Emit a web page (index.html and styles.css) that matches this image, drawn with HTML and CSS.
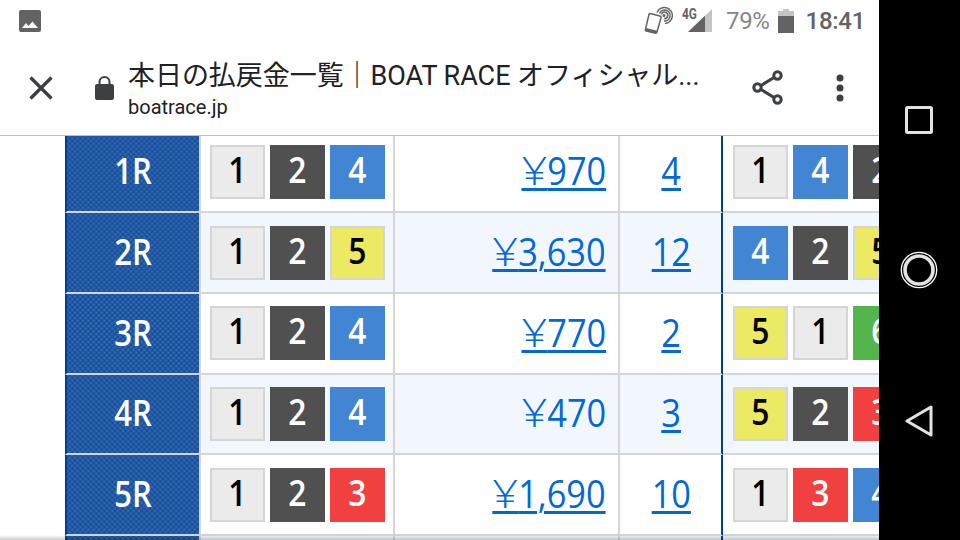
FILE: index.html
```
<!DOCTYPE html>
<html lang="ja">
<head>
  <meta charset="UTF-8">
  <meta name="viewport" content="width=device-width, initial-scale=1.0">
  <title>本日の払戻金一覧｜BOAT RACE オフィシャルウェブサイト</title>
  <link rel="stylesheet" href="styles.css">
</head>
<body>
  <div class="screen">
    <header class="top">
      <div class="status">
        <svg class="ic-image" width="22" height="22" viewBox="0 0 22 22"><rect width="22" height="22" rx="2" fill="#636363"/><path d="M3 18l4-5 2.500 3L13.500 11.500 19 18z" fill="#fff"/></svg>
        <div class="status-right">
          <svg class="ic-nfc" width="30" height="30" viewBox="0 0 30 30" fill="none" stroke="#636363" stroke-width="1.500">
            <path d="M6 7.500l10 2.500q1.500.400 1 1.800l-4 14.200q-.5 1.500-2 1.100L2.500 25q-1.500-.4-1-2L5 8.500q.300-1.200 1-1z"/>
            <path d="M1.800 23.500l11 2.800" stroke-width="3"/>
            <path d="M13 6.500a8 8 0 1 1 8 11M15.500 7.500a5.500 5.500 0 1 1 4.500 7.500M17.500 8.500a3.200 3.200 0 1 1 2.500 4"/>
            <circle cx="20" cy="9.500" r="1.500" fill="#636363" stroke="none"/>
          </svg>
          <span class="net">4G</span>
          <svg class="ic-signal" width="24" height="23" viewBox="0 0 24 23"><path d="M0 23L24 0v23z" fill="#c4c4c4"/><path d="M0 23L17 6.700V23z" fill="#636363"/></svg>
          <span class="percent">79%</span>
          <svg class="ic-battery" width="16" height="24" viewBox="0 0 16 24"><path d="M5 0h6v2h5v5H0V2h5z" fill="#c4c4c4"/><path d="M0 7h16v17H0z" fill="#636363"/></svg>
          <span class="clock">18:41</span>
        </div>
      </div>
      <div class="toolbar">
        <svg class="ic-close" width="24" height="24" viewBox="0 0 24 24"><path d="M1.500 1.500l21 21M22.500 1.500l-21 21" stroke="#3c4043" stroke-width="3.300"/></svg>
        <svg class="ic-lock" width="19" height="24" viewBox="0 0 19 24"><rect y="8" width="19" height="16" rx="2" fill="#3c4043"/><path d="M4.500 9V6a5 5 0 0 1 10 0v3" fill="none" stroke="#3c4043" stroke-width="2"/></svg>
        <div class="page-info">
          <div class="page-title">本日の払戻金一覧｜BOAT RACE オフィシャル...</div>
          <div class="page-url">boatrace.jp</div>
        </div>
        <svg class="ic-share" width="32" height="35" viewBox="0 0 32 35" fill="none" stroke="#3c4043" stroke-width="3"><path d="M9 15.500L22 7.500M9 19.500l13 8"/><circle cx="5.500" cy="17.500" r="3.700"/><circle cx="25.500" cy="5.500" r="3.700"/><circle cx="25.500" cy="29.500" r="3.700"/></svg>
        <svg class="ic-more" width="8" height="28" viewBox="0 0 8 28" fill="#3c4043"><circle cx="4" cy="4" r="3.500"/><circle cx="4" cy="14" r="3.500"/><circle cx="4" cy="24" r="3.500"/></svg>
      </div>
    </header>

    <main class="content">
      <div class="results">
        <div class="row">
          <div class="race"><span>1R</span></div>
          <div class="combo"><i class="n1"><span>1</span></i><i class="n2"><span>2</span></i><i class="n4"><span>4</span></i></div>
          <div class="price"><a><b>¥</b>970</a></div>
          <div class="rank"><a>4</a></div>
          <div class="combo second"><i class="n1"><span>1</span></i><i class="n4"><span>4</span></i><i class="n2"><span>2</span></i></div>
        </div>
        <div class="row even">
          <div class="race"><span>2R</span></div>
          <div class="combo"><i class="n1"><span>1</span></i><i class="n2"><span>2</span></i><i class="n5"><span>5</span></i></div>
          <div class="price"><a><b>¥</b>3,630</a></div>
          <div class="rank"><a>12</a></div>
          <div class="combo second"><i class="n4"><span>4</span></i><i class="n2"><span>2</span></i><i class="n5"><span>5</span></i></div>
        </div>
        <div class="row">
          <div class="race"><span>3R</span></div>
          <div class="combo"><i class="n1"><span>1</span></i><i class="n2"><span>2</span></i><i class="n4"><span>4</span></i></div>
          <div class="price"><a><b>¥</b>770</a></div>
          <div class="rank"><a>2</a></div>
          <div class="combo second"><i class="n5"><span>5</span></i><i class="n1"><span>1</span></i><i class="n6"><span>6</span></i></div>
        </div>
        <div class="row even">
          <div class="race"><span>4R</span></div>
          <div class="combo"><i class="n1"><span>1</span></i><i class="n2"><span>2</span></i><i class="n4"><span>4</span></i></div>
          <div class="price"><a class="plain"><b>¥</b>470</a></div>
          <div class="rank"><a>3</a></div>
          <div class="combo second"><i class="n5"><span>5</span></i><i class="n2"><span>2</span></i><i class="n3"><span>3</span></i></div>
        </div>
        <div class="row">
          <div class="race"><span>5R</span></div>
          <div class="combo"><i class="n1"><span>1</span></i><i class="n2"><span>2</span></i><i class="n3"><span>3</span></i></div>
          <div class="price"><a><b>¥</b>1,690</a></div>
          <div class="rank"><a>10</a></div>
          <div class="combo second"><i class="n1"><span>1</span></i><i class="n3"><span>3</span></i><i class="n4"><span>4</span></i></div>
        </div>
        <div class="row even">
          <div class="race"></div>
          <div class="combo"></div>
          <div class="price"></div>
          <div class="rank"></div>
          <div class="combo second"></div>
        </div>
      </div>
    </main>
  </div>

  <nav class="navbar">
    <svg width="28" height="28" viewBox="0 0 28 28"><rect x="1.500" y="1.500" width="25" height="25" rx="1" fill="none" stroke="#e3e3e3" stroke-width="3"/></svg>
    <svg width="38" height="38" viewBox="0 0 38 38" fill="none"><circle cx="19" cy="19" r="17.700" stroke="#fff" stroke-width="1.300"/><circle cx="19" cy="19" r="14" stroke="#e3e3e3" stroke-width="3.600"/></svg>
    <svg width="28" height="32" viewBox="0 0 28 32"><path d="M26 2v28L2 16z" fill="none" stroke="#e3e3e3" stroke-width="3" stroke-linejoin="round"/></svg>
  </nav>
</body>
</html>
```
FILE: styles.css
```
* {
  box-sizing: border-box;
}
body {
  margin: 0;
  width: 960px;
  height: 540px;
  display: flex;
  overflow: hidden;
  background: #000;
  font-family: Roboto, "Noto Sans CJK JP", sans-serif;
}
svg {
  display: block;
  flex: none;
}
.screen {
  width: 879px;
  height: 540px;
  display: flex;
  flex-direction: column;
  background: #fff;
  overflow: hidden;
}

/* browser header */
.top {
  height: 136px;
  flex: none;
  border-bottom: 1px solid #bdbdbd;
  background: #fff;
  z-index: 1;
}
.status {
  height: 41px;
  padding: 0 14px 0 19px;
  display: flex;
  justify-content: space-between;
  align-items: center;
  color: #636363;
}
.status-right {
  display: flex;
  align-items: center;
}
.net {
  font-size: 14px;
  font-weight: 700;
  line-height: 14px;
  margin: 0 -18px 13px 8px;
  width: 16px;
  transform: scaleX(.85);
  transform-origin: left;
}
.ic-signal {
  margin-left: 8px;
}
.percent {
  font-size: 24px;
  color: #868686;
  margin-left: 14px;
  padding-top: 1px;
  letter-spacing: -.3px;
}
.ic-battery {
  margin-left: 8px;
}
.clock {
  font-size: 24px;
  font-weight: 500;
  margin-left: 12px;
  padding-top: 1px;
  letter-spacing: -.3px;
}
.toolbar {
  height: 93px;
  padding: 0 35px 0 29px;
  display: flex;
  align-items: center;
}
.ic-lock {
  margin-left: 42px;
}
.page-info {
  flex: 1;
  margin-left: 14px;
  padding-top: 3px;
  color: #202124;
  white-space: nowrap;
}
.page-title {
  font-size: 27px;
  line-height: 36px;
  letter-spacing: -.05px;
}
.page-url {
  font-size: 20px;
  line-height: 26px;
}
.ic-more {
  margin-left: 52px;
}

/* results table */
.content {
  flex: 1;
  min-height: 0;
  overflow: hidden;
  position: relative;
}
.content::after {
  content: "";
  position: absolute;
  left: 0;
  right: 0;
  bottom: 0;
  height: 5px;
  background: linear-gradient(rgba(0, 0, 0, 0), rgba(0, 0, 0, .2));
}
.results {
  margin: -3.350px 0 0 65px;
  width: 960px;
  font-family: "Open Sans", "Noto Sans", sans-serif;
}
.row {
  height: 80.670px;
  display: grid;
  grid-template-columns: 136px 193.500px 225.500px 103px 302px;
}
.row > div {
  display: flex;
  align-items: center;
  border-right: 2px solid #d5d5d5;
  border-bottom: 2px solid #d5d5d5;
}
.even {
  background: #f2f7fe;
}
.row .race {
  justify-content: center;
  border-left: 2px solid #003d96;
  color: #fff;
  font-size: 36.500px;
  font-weight: 600;
  line-height: 50px;
  padding-bottom: 3px;
  background-color: #134c9d;
  background-image: radial-gradient(circle, #3468ad 30%, transparent 50%), radial-gradient(circle, #3468ad 30%, transparent 50%);
  background-size: 5.330px 5.330px;
  background-position: 0 0, 2.670px 2.670px;
}
.race span {
  transform: scaleX(.85);
}
.row .combo {
  gap: 5.300px;
  padding-left: 9px;
}
.row .second {
  padding-left: 10px;
}
.combo i {
  width: 54.700px;
  height: 54px;
  flex: none;
  display: flex;
  align-items: center;
  justify-content: center;
  padding-bottom: 6px;
  font-style: normal;
  font-size: 36.500px;
  font-weight: 600;
  line-height: 46px;
  color: #fff;
}
.combo span {
  transform: scaleX(.87);
}
.combo .n1 {
  background: #ebebeb;
  border: 2px solid #d5d5d5;
  color: #000;
}
.combo .n2 {
  background: #505050;
}
.combo .n3 {
  background: #f04040;
}
.combo .n4 {
  background: #4285d2;
}
.combo .n5 {
  background: #ece962;
  border: 2px solid #d5d5d5;
  color: #000;
}
.combo .n6 {
  background: #55b54d;
}
.row .price {
  justify-content: flex-end;
  padding: 0 12px 3px 0;
}
.row .rank {
  justify-content: center;
  padding: 0 0 3px 1px;
  border-right: 2px solid #003d96;
}
.price a,
.rank a {
  display: inline-block;
  color: #0068d9;
  font-size: 39px;
  line-height: 50px;
  text-decoration: underline;
  text-decoration-thickness: 3px;
  text-underline-offset: 3px;
  transform: scaleX(.88);
}
.price a {
  transform-origin: right;
}
.price b {
  display: inline-block;
  font-weight: 360;
  text-decoration: underline;
  text-decoration-thickness: 3px;
  text-underline-offset: 3px;
  transform: scaleX(1.320);
  transform-origin: right;
}
.price .plain,
.price .plain b {
  text-decoration: none;
}

/* android buttons */
.navbar {
  width: 81px;
  height: 540px;
  padding: 106px 1px 103px 0;
  display: flex;
  flex-direction: column;
  align-items: center;
  justify-content: space-between;
}
```
